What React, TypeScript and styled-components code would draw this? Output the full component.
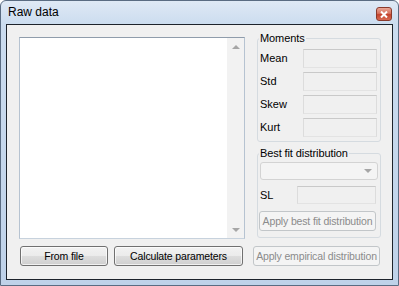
import React from "react";
import styled, { createGlobalStyle } from "styled-components";

const GlobalStyle = createGlobalStyle`
  html, body {
    margin: 0;
    padding: 0;
    background: #ffffff;
  }
  body {
    font-family: "Liberation Sans", Arial, sans-serif;
  }
`;

// window frame (Win7 basic look)
const Window = styled.div`
  box-sizing: border-box;
  width: 399px;
  height: 286px;
  display: flex;
  flex-direction: column;
  border: 1px solid #5a6c82;
  border-radius: 6px 6px 0 0;
  background: linear-gradient(to bottom, #dfe9f5 0px, #cbdcef 24px, #bfd2e9 100%);
  padding: 0 5px 5px 5px;
`;

const TitleBar = styled.div`
  height: 23px;
  display: flex;
  align-items: flex-start;
  justify-content: space-between;
  padding: 0 1px 0 2px;
`;

const Title = styled.span`
  font-size: 12px;
  line-height: 23px;
  color: #000;
`;

const CloseButton = styled.div`
  box-sizing: border-box;
  margin-top: 6px;
  width: 16px;
  height: 14px;
  border: 1px solid #8a3a2c;
  border-radius: 3px;
  background: linear-gradient(to bottom, #eaa897 0%, #d6705c 45%, #c4432c 55%, #d86a52 100%);
  display: flex;
  align-items: center;
  justify-content: center;
`;

const Client = styled.div`
  flex: 1;
  border: 1px solid #1d232b;
  background: #f0f0f0;
  display: grid;
  grid-template-columns: 226px 128px;
  grid-template-rows: 207px 20px;
  column-gap: 8px;
  row-gap: 7px;
  padding: 7px 11px 0 12px;
  font-size: 11px;
  color: #000;
`;

const ListBox = styled.div`
  box-sizing: border-box;
  margin-top: 5px;
  height: 202px;
  display: flex;
  border: 1px solid;
  border-color: #8f9cab #b6c3d1 #c7d2dd #b6c3d1;
  background: #fff;
`;

const ListArea = styled.div`
  flex: 1;
`;

const ScrollBar = styled.div`
  width: 17px;
  background: #f2f2f2;
  display: flex;
  flex-direction: column;
  justify-content: space-between;
  align-items: center;
  padding: 7px 0 6px;
`;

const Arrow = styled.div<{ down?: boolean }>`
  width: 0;
  height: 0;
  border-left: 4px solid transparent;
  border-right: 4px solid transparent;
  ${({ down }) => (down ? "border-top: 4px solid #a6a6a6;" : "border-bottom: 4px solid #a6a6a6;")}
`;

const RightPanel = styled.div`
  display: flex;
  flex-direction: column;
  padding-left: 4px;
`;

const Group = styled.fieldset<{ gapTop?: number }>`
  margin: ${({ gapTop }) => gapTop || 0}px 0 0 0;
  min-width: 0;
  border: 1px solid #d5dbe0;
  border-radius: 3px;
  display: flex;
  flex-direction: column;
`;

const MomentsGroup = styled(Group)`
  padding: 4px 3px 4px 2px;
  gap: 4px;
`;

const FitGroup = styled(Group)`
  padding: 2px 2px 6px 2px;
`;

const Legend = styled.legend`
  padding: 0 1px;
  margin-left: -1px;
  font-size: 11px;
  line-height: 13px;
  letter-spacing: -0.1px;
`;

const Row = styled.div<{ top?: number }>`
  display: flex;
  align-items: center;
  justify-content: space-between;
  margin-top: ${({ top }) => top || 0}px;
`;

const Label = styled.span`
  line-height: 13px;
`;

const TextBox = styled.div<{ w: number; h: number }>`
  box-sizing: border-box;
  width: ${({ w }) => w}px;
  height: ${({ h }) => h}px;
  border: 1px solid;
  border-color: #c9c9c9 #dcdcdc #e3e3e3 #dcdcdc;
  background: #f0f0f0;
`;

const ComboBox = styled.div`
  box-sizing: border-box;
  height: 18px;
  border: 1px solid #d3d3d3;
  border-radius: 3px;
  background: #f4f4f4;
  display: flex;
  align-items: center;
  justify-content: flex-end;
  padding-right: 5px;
`;

const ButtonRow = styled.div`
  display: flex;
  gap: 6px;
  padding-left: 1px;
`;

const Button = styled.div<{ w: number; disabled?: boolean }>`
  box-sizing: border-box;
  width: ${({ w }) => w}px;
  height: 20px;
  border-radius: 3px;
  display: flex;
  align-items: center;
  justify-content: center;
  font-size: 10.5px;
  letter-spacing: -0.15px;
  white-space: nowrap;
  border: 1px solid ${({ disabled }) => (disabled ? "#c2c6c9" : "#707070")};
  color: ${({ disabled }) => (disabled ? "#8b8b8b" : "#000")};
  background: ${({ disabled }) =>
    disabled ? "#f4f4f4" : "linear-gradient(to bottom, #f2f2f2 0%, #ebebeb 50%, #dddddd 51%, #cfcfcf 100%)"};
  box-shadow: ${({ disabled }) => (disabled ? "none" : "inset 0 0 0 1px rgba(255,255,255,0.7)")};
`;

const moments = ["Mean", "Std", "Skew", "Kurt"];

const App: React.FC = () => {
  return (
    <>
      <GlobalStyle />
      <Window>
        <TitleBar>
          <Title>Raw data</Title>
          <CloseButton>
            <svg width="8" height="7" viewBox="0 0 8 7">
              <path d="M1 0.5 L7 6.5 M7 0.5 L1 6.5" stroke="#fff" strokeWidth="2" />
            </svg>
          </CloseButton>
        </TitleBar>
        <Client>
          <ListBox>
            <ListArea />
            <ScrollBar>
              <Arrow />
              <Arrow down />
            </ScrollBar>
          </ListBox>
          <RightPanel>
            <MomentsGroup>
              <Legend>Moments</Legend>
              {moments.map((m) => (
                <Row key={m}>
                  <Label>{m}</Label>
                  <TextBox w={74} h={19} />
                </Row>
              ))}
            </MomentsGroup>
            <FitGroup gapTop={5}>
              <Legend>Best fit distribution</Legend>
              <ComboBox>
                <Arrow down />
              </ComboBox>
              <Row top={6}>
                <Label>SL</Label>
                <TextBox w={79} h={18} style={{ marginRight: 2 }} />
              </Row>
              <Row top={7}>
                <Button w={117} disabled style={{ marginLeft: -1 }}>
                  Apply best fit distribution
                </Button>
              </Row>
            </FitGroup>
          </RightPanel>
          <ButtonRow>
            <Button w={88}>From file</Button>
            <Button w={129}>Calculate parameters</Button>
          </ButtonRow>
          <Button w={127} disabled>
            Apply empirical distribution
          </Button>
        </Client>
      </Window>
    </>
  );
};

export default App;
